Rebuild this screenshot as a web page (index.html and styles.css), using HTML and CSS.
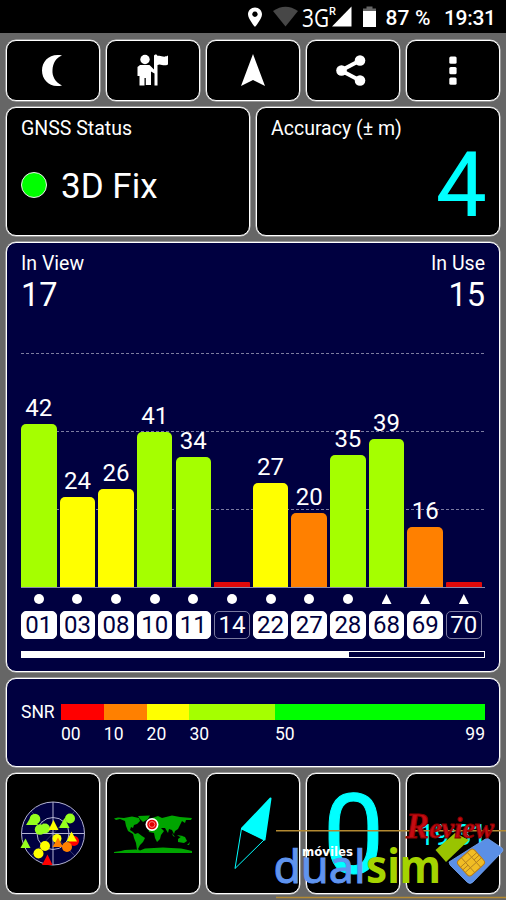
FILE: index.html
```
<!DOCTYPE html>
<html lang="en">
  <head>
    <meta charset="utf-8" />
    <title>GNSS Status</title>
    <link rel="stylesheet" href="styles.css">
  </head>
  <body>
    <div class="statusbar">
      <svg width="266" height="33" viewBox="240 0 266 33">
        <path fill="#fff" fill-rule="evenodd" d="M255 7.500C251 7.500 248 10.500 248 14.300C248 19 255 27 255 27S262 19 262 14.300C262 10.500 259 7.500 255 7.500ZM255 11.500A2.700 2.700 0 1 1 254.900 11.500Z" />
        <path fill="#474747" d="M273 11Q285.500 2.500 298 11L285.500 26.500Z" />
        <path fill="#fff" d="M332 26.500L351.500 6.500V26.500Z" />
        <path fill="#666" d="M363 11V8.500H366.500V6.500H372.500V8.500H376V11Z" />
        <path fill="#fff" d="M363 11H376V27H363Z" />
        <text class="net" x="302" y="26.500" textLength="27" lengthAdjust="spacingAndGlyphs">3G</text>
        <text class="roaming" x="329" y="15">R</text>
        <text class="status-text" x="385.500" y="25" textLength="45">87 %</text>
        <text class="status-text" x="444" y="25" textLength="52">19:31</text>
      </svg>
    </div>

    <div class="screen">
      <div class="row toolbar">
        <div class="tile">
          <svg width="94" height="61" viewBox="6 40 94 61">
            <path fill="#fff" d="M62 55.500C50 53 42 61 42 70.500C42 80 50 88.500 62 85.500C55 82 52 76 52.500 70C52.800 63 56 58 62 55.500Z" />
          </svg>
        </div>
        <div class="tile">
          <svg width="94" height="61" viewBox="106 40 94 61">
            <g fill="#fff">
              <circle cx="145" cy="59.500" r="4.700" />
              <path d="M140 65H149.500L154 69.500V56C154 54 157.500 54 157.500 56C161 54.500 163 58.500 168 55.500V64.500C163 67 161 63 157.500 65V85.500H154.500V73.500L151 71.500V85H145.800V78H144.500V85.500H139.500V76H137.500V67Z" />
            </g>
          </svg>
        </div>
        <div class="tile">
          <svg width="94" height="61" viewBox="206 40 94 61">
            <path fill="#fff" d="M253 54L265 86L253 80L241 86Z" />
          </svg>
        </div>
        <div class="tile">
          <svg width="94" height="61" viewBox="306 40 94 61">
            <path fill="none" stroke="#fff" stroke-width="4" d="M360 60.500L341 70.500L360 80.500" />
            <g fill="#fff">
              <circle cx="360" cy="60.500" r="5.300" />
              <circle cx="341.500" cy="70.500" r="5.300" />
              <circle cx="360" cy="80.500" r="5.300" />
            </g>
          </svg>
        </div>
        <div class="tile">
          <svg width="94" height="61" viewBox="406 40 94 61">
            <g fill="#fff">
              <rect x="449.300" y="56.500" width="7.300" height="7.300" rx="1.500" />
              <rect x="449.300" y="67" width="7.300" height="7.300" rx="1.500" />
              <rect x="449.300" y="77.500" width="7.300" height="7.300" rx="1.500" />
            </g>
          </svg>
        </div>
      </div>

      <div class="row info">
        <div class="tile status">
          <div class="label">GNSS Status</div>
          <div class="fix"><span class="led"></span>3D Fix</div>
        </div>
        <div class="tile accuracy">
          <div class="label">Accuracy (± m)</div>
          <div class="accuracy-value">4</div>
        </div>
      </div>

      <div class="tile navy satellites">
        <div class="counts">
          <div>
            <div class="label">In View</div>
            <div class="count">17</div>
          </div>
          <div class="right">
            <div class="label">In Use</div>
            <div class="count">15</div>
          </div>
        </div>
        <div class="chart">
          <div class="bar"><span>42</span><i class="lime" style="height: 163px"></i></div>
          <div class="bar"><span>24</span><i class="yellow" style="height: 90px"></i></div>
          <div class="bar"><span>26</span><i class="yellow" style="height: 98px"></i></div>
          <div class="bar"><span>41</span><i class="lime" style="height: 155.500px"></i></div>
          <div class="bar"><span>34</span><i class="lime" style="height: 130px"></i></div>
          <div class="bar"><i class="red" style="height: 5px"></i></div>
          <div class="bar"><span>27</span><i class="yellow" style="height: 104px"></i></div>
          <div class="bar"><span>20</span><i class="orange" style="height: 74px"></i></div>
          <div class="bar"><span>35</span><i class="lime" style="height: 132px"></i></div>
          <div class="bar"><span>39</span><i class="lime" style="height: 148px"></i></div>
          <div class="bar"><span>16</span><i class="orange" style="height: 60px"></i></div>
          <div class="bar"><i class="red" style="height: 5px"></i></div>
        </div>
        <div class="ids">
          <div class="sat"><b class="dot"></b><span>01</span></div>
          <div class="sat"><b class="dot"></b><span>03</span></div>
          <div class="sat"><b class="dot"></b><span>08</span></div>
          <div class="sat"><b class="dot"></b><span>10</span></div>
          <div class="sat"><b class="dot"></b><span>11</span></div>
          <div class="sat unused"><b class="dot"></b><span>14</span></div>
          <div class="sat"><b class="dot"></b><span>22</span></div>
          <div class="sat"><b class="dot"></b><span>27</span></div>
          <div class="sat"><b class="dot"></b><span>28</span></div>
          <div class="sat"><b class="tri"></b><span>68</span></div>
          <div class="sat"><b class="tri"></b><span>69</span></div>
          <div class="sat unused"><b class="tri"></b><span>70</span></div>
        </div>
        <div class="scroll"><div class="scroll-fill"></div></div>
      </div>

      <div class="tile navy snr">
        <div class="snr-label">SNR</div>
        <div class="scale">
          <div class="scale-bar">
            <i class="pure-red"></i><i class="orange"></i><i class="yellow"></i><i class="lime wide"></i><i class="green"></i>
          </div>
          <div class="scale-text">
            <span>00</span><span>10</span><span>20</span><span class="wide">30</span><span class="last"><em>50</em><em>99</em></span>
          </div>
        </div>
      </div>

      <div class="row pages">
        <div class="tile">
          <svg width="94" height="121" viewBox="6 773 94 121">
            <circle cx="53" cy="833.500" r="31.500" fill="#000040" />
            <g fill="none" stroke="#b4b4d2" stroke-width="1">
              <circle cx="53" cy="833.500" r="31.500" />
              <circle cx="53" cy="833.500" r="16" />
              <path d="M21.500 833.500H84.500M53 802V865" />
              <path d="M53 833.500L75 856M53 833.500L31 856M53 833.500L31 811M53 833.500L75 811" stroke-opacity=".3" />
            </g>
            <g fill="#96ff1e">
              <circle cx="35" cy="819" r="5.300" />
              <path d="M26 825L32 815L38 825Z" />
              <circle cx="70" cy="818.500" r="5" />
              <path d="M59 828L64.500 818L69.500 828Z" />
              <circle cx="40" cy="829.500" r="5.200" />
              <circle cx="45" cy="828.500" r="5" />
              <path d="M20.500 848L25.500 838.500L30.500 848Z" />
            </g>
            <circle cx="74" cy="841" r="5" fill="#f00" />
            <path fill="#f00" d="M42 865L47.500 854.500L52.500 865Z" />
            <g fill="#ff0">
              <path d="M48.500 830L53.500 820L58.500 830Z" />
              <path d="M66.500 841.500L71.500 831.500L77 841.500Z" />
              <circle cx="57" cy="838.500" r="4.500" />
              <circle cx="45" cy="846" r="5" />
              <circle cx="38.500" cy="853.500" r="5" />
            </g>
            <g fill="#ff8000">
              <path d="M52.500 847L58 837.500L63 847Z" />
              <circle cx="67" cy="847" r="5" />
            </g>
          </svg>
        </div>
        <div class="tile">
          <svg width="94" height="121" viewBox="106 773 94 121">
            <g fill="#00a500">
              <path d="M114 818.500L118 817.500L124 818L132 816.500L139 818L140 821L137 824L134 825L133 828L131 827L130 830L133 832L135 834L138 833L142 836L145 838L143 842L140 845L138 849L140 851L137 850L136 843L134 838L133 834L128 831L126 826L125 821L120 819L116 820Z" />
              <path d="M138 816L150 815.500L148 819L143 822L140 819Z" />
              <path d="M152 818L158 816L162 818L166 817L172 815.500L180 817L192 818L191 820L186 820L185 823L182 821L180 825L178 829L175 831L174 834L172 830L169 829L168 833L165 828L161 828L164 831L161 835L160 839L157 842L155 838L154 833L149 832L148 828L151 825L150 823Z" />
              <path d="M178 839L182 836L185 837L187 841L184 843L178 842ZM172 833L175 837L173 836ZM177 835L183 836L180 837ZM187 845L190 842L189 845Z" />
              <path d="M114 852L121 851L125 850L136 849.500L140 850.500L145 848.500L154 848L163 847.500L171 848L181 848.500L188 850L192 851V853H114Z" />
            </g>
            <circle cx="152" cy="824.500" r="6.500" fill="#fff" />
            <circle cx="152" cy="824.500" r="4.800" fill="#e10000" />
            <circle cx="152" cy="824.500" r="2.900" fill="none" stroke="#ff9a9a" stroke-width=".8" />
          </svg>
        </div>
        <div class="tile">
          <svg width="94" height="121" viewBox="206 773 94 121">
            <g stroke="cyan" stroke-linejoin="round">
              <path fill="cyan" d="M270.500 798.500L242 828.500L264.500 839.500Z" stroke-width="2" />
              <path fill="none" d="M241.500 828.500L235 868.500L264.500 839.500Z" />
            </g>
          </svg>
        </div>
        <div class="tile">
          <svg width="94" height="121" viewBox="306 773 94 121">
            <text class="speed" x="323" y="873" textLength="61" lengthAdjust="spacingAndGlyphs">0</text>
          </svg>
        </div>
        <div class="tile">
          <svg width="94" height="121" viewBox="406 773 94 121">
            <text class="clock" x="419" y="845" textLength="68" lengthAdjust="spacingAndGlyphs">19:31</text>
          </svg>
        </div>
      </div>
    </div>

    <!-- watermark over the bottom tiles -->
    <svg class="watermark" width="236" height="90" viewBox="270 810 236 90">
      <path stroke="#b48a32" stroke-width="1.500" d="M276 830.800H506M276 897.500H506" />
      <path fill="#99c400" d="M435.500 850L455 833L469 840L446 862Z" />
      <path fill="#5a8fe6" stroke="#76a5f0" stroke-width=".8" stroke-linejoin="round" d="M449 862L487 838L502 848Q504 850 502 852L473 882Q470 885 467 882L450 865Z" />
      <g transform="rotate(-42 471 862.500)">
        <rect x="460" y="852.500" width="22" height="20" rx="3.500" fill="#f1bd24" stroke="#bc7d15" />
        <path fill="none" stroke="#a97720" stroke-width=".8" d="M460 859H467V852.500M460 866H467V872.500M482 859H475V852.500M482 866H475V872.500M467 859H475V866H467ZM460 862.500H467M475 862.500H482" />
      </g>
      <text class="dual" x="273.500" y="882.500" textLength="92" lengthAdjust="spacingAndGlyphs">dual</text>
      <text class="sim" x="366" y="882.500" textLength="75" lengthAdjust="spacingAndGlyphs">sim</text>
      <text class="moviles" x="302" y="855.500" textLength="51" lengthAdjust="spacingAndGlyphs">móviles</text>
      <text class="review" x="406" y="838" textLength="88" lengthAdjust="spacingAndGlyphs"><tspan class="big-r">R</tspan>eview</text>
    </svg>
  </body>
</html>
```
FILE: styles.css
```
* {
  box-sizing: border-box;
}
body {
  margin: 0;
  width: 506px;
  height: 900px;
  overflow: hidden;
  background-color: #666;
  color: #fff;
  font-family: Roboto, sans-serif;
}
svg {
  display: block;
}
.statusbar {
  height: 33px;
  background-color: #000;
  display: flex;
  justify-content: flex-end;
}
.net {
  font-family: "Open Sans", sans-serif;
  font-size: 26px;
  fill: #fff;
}
.roaming {
  font-size: 11px;
  font-weight: 500;
  fill: #fff;
}
.status-text {
  font-size: 21px;
  font-weight: 500;
  fill: #fff;
}
.screen {
  display: flex;
  flex-direction: column;
  gap: 6px;
  padding: 7px 6px 6px;
}
.row {
  display: flex;
  gap: 6px;
}
.tile {
  flex: 1;
  background-color: #000;
  border: 1px solid #fff;
  border-radius: 10px;
  box-shadow: 0 0 0 0.5px #ccc;
  overflow: hidden;
}
.tile > svg {
  margin: -1px;
}
.navy {
  flex: none;
  background-color: #000040;
}
.toolbar {
  height: 61px;
}
.info {
  height: 129px;
}
.info .tile {
  padding: 9px 14px;
}
.label {
  font-size: 19.500px;
  line-height: 24px;
}
.fix {
  display: flex;
  align-items: center;
  gap: 14px;
  margin-top: 25px;
  font-size: 35px;
  line-height: 42px;
}
.led {
  width: 26px;
  height: 26px;
  border: 1.5px solid #eee;
  border-radius: 50%;
  background-color: #0f0;
  margin-top: -4px;
}
.accuracy-value {
  color: cyan;
  font-size: 91px;
  line-height: 91px;
  text-align: right;
  margin-top: -1px;
  margin-right: -2px;
}
.satellites {
  height: 430px;
  padding: 9px 14px;
}
.counts {
  display: flex;
  justify-content: space-between;
}
.count {
  font-size: 32.500px;
  line-height: 38px;
}
.right {
  text-align: right;
}
.chart {
  height: 235px;
  margin-top: 39px;
  display: flex;
  gap: 3.150px;
  align-items: flex-end;
  border-bottom: 1px solid #8888aa;
  background-image: repeating-linear-gradient(90deg, transparent 0 3px, #000040 3px 5px), linear-gradient(#7c7ca0, #7c7ca0), linear-gradient(#7c7ca0, #7c7ca0), linear-gradient(#7c7ca0, #7c7ca0);
  background-size: auto, 100% 1px, 100% 1px, 100% 1px;
  background-position: 0 0, 0 0, 0 78px, 0 156px;
  background-repeat: repeat, no-repeat, no-repeat, no-repeat;
}
.bar {
  width: 35.500px;
  text-align: center;
  font-size: 24px;
  line-height: 32px;
}
.bar span,
.bar i {
  display: block;
}
.bar i {
  border-radius: 5px 5px 0 0;
}
.bar i.red {
  border-radius: 1px 1px 0 0;
}
.lime {
  background-color: #a5ff00;
}
.yellow {
  background-color: #ff0;
}
.orange {
  background-color: #ff8000;
}
.red {
  background-color: #e10a0a;
}
.pure-red {
  background-color: #f00;
}
.green {
  background-color: #0f0;
}
.ids {
  display: flex;
  gap: 3.150px;
  margin-top: 6px;
}
.sat {
  width: 35.500px;
  display: flex;
  flex-direction: column;
  align-items: center;
  gap: 7px;
}
.dot {
  width: 10px;
  height: 10px;
  border-radius: 50%;
  background-color: #fff;
}
.tri {
  width: 10px;
  height: 10px;
  background-color: #fff;
  clip-path: polygon(50% 0, 100% 100%, 0 100%);
}
.sat span {
  width: 100%;
  height: 28px;
  border: 1px solid #fff;
  border-radius: 5px;
  background-color: #fff;
  color: #000040;
  text-align: center;
  font-size: 24px;
  line-height: 27px;
}
.unused span {
  background-color: #000040;
  border-color: #7a7aa0;
  color: #fff;
}
.scroll {
  height: 7px;
  margin-top: 12px;
  border: 1.5px solid #fff;
}
.scroll-fill {
  width: 327px;
  height: 100%;
  background-color: #fff;
}
.snr {
  height: 89px;
  display: flex;
  padding: 25px 14px 0;
}
.snr-label {
  width: 40px;
  font-size: 17.500px;
  line-height: 16px;
}
.scale {
  flex: 1;
}
.scale-bar {
  display: flex;
  height: 16px;
}
.scale-bar i {
  width: 42.800px;
}
.scale-bar i.wide {
  width: 85.600px;
}
.scale-bar i.green {
  flex: 1;
}
.scale-text {
  display: flex;
  margin-top: 4px;
  font-size: 17.500px;
  line-height: 20px;
}
.scale-text span {
  width: 42.800px;
}
.scale-text .wide {
  width: 85.600px;
}
.scale-text .last {
  flex: 1;
  display: flex;
  justify-content: space-between;
}
em {
  font-style: normal;
}
.pages {
  height: 121px;
}
.speed {
  font-size: 112px;
  fill: cyan;
  stroke: cyan;
  stroke-width: 1px;
}
.clock {
  font-size: 30px;
  fill: cyan;
}
.watermark {
  position: absolute;
  left: 270px;
  top: 810px;
}
.dual,
.sim {
  font-family: "Noto Sans", sans-serif;
  font-size: 46px;
  fill: #5f94ef;
}
.dual {
  stroke: #5f94ef;
  stroke-width: 1px;
}
.sim {
  font-weight: 700;
  fill: #a5d400;
}
.moviles {
  font-family: "DejaVu Sans", sans-serif;
  font-size: 12px;
  font-weight: 700;
  fill: #fff;
}
.review {
  font-family: "Liberation Serif", serif;
  font-size: 30px;
  font-style: italic;
  font-weight: 700;
  fill: #c40b12;
  stroke: #8c0000;
  stroke-width: 1px;
}
.big-r {
  font-size: 36px;
}
```
